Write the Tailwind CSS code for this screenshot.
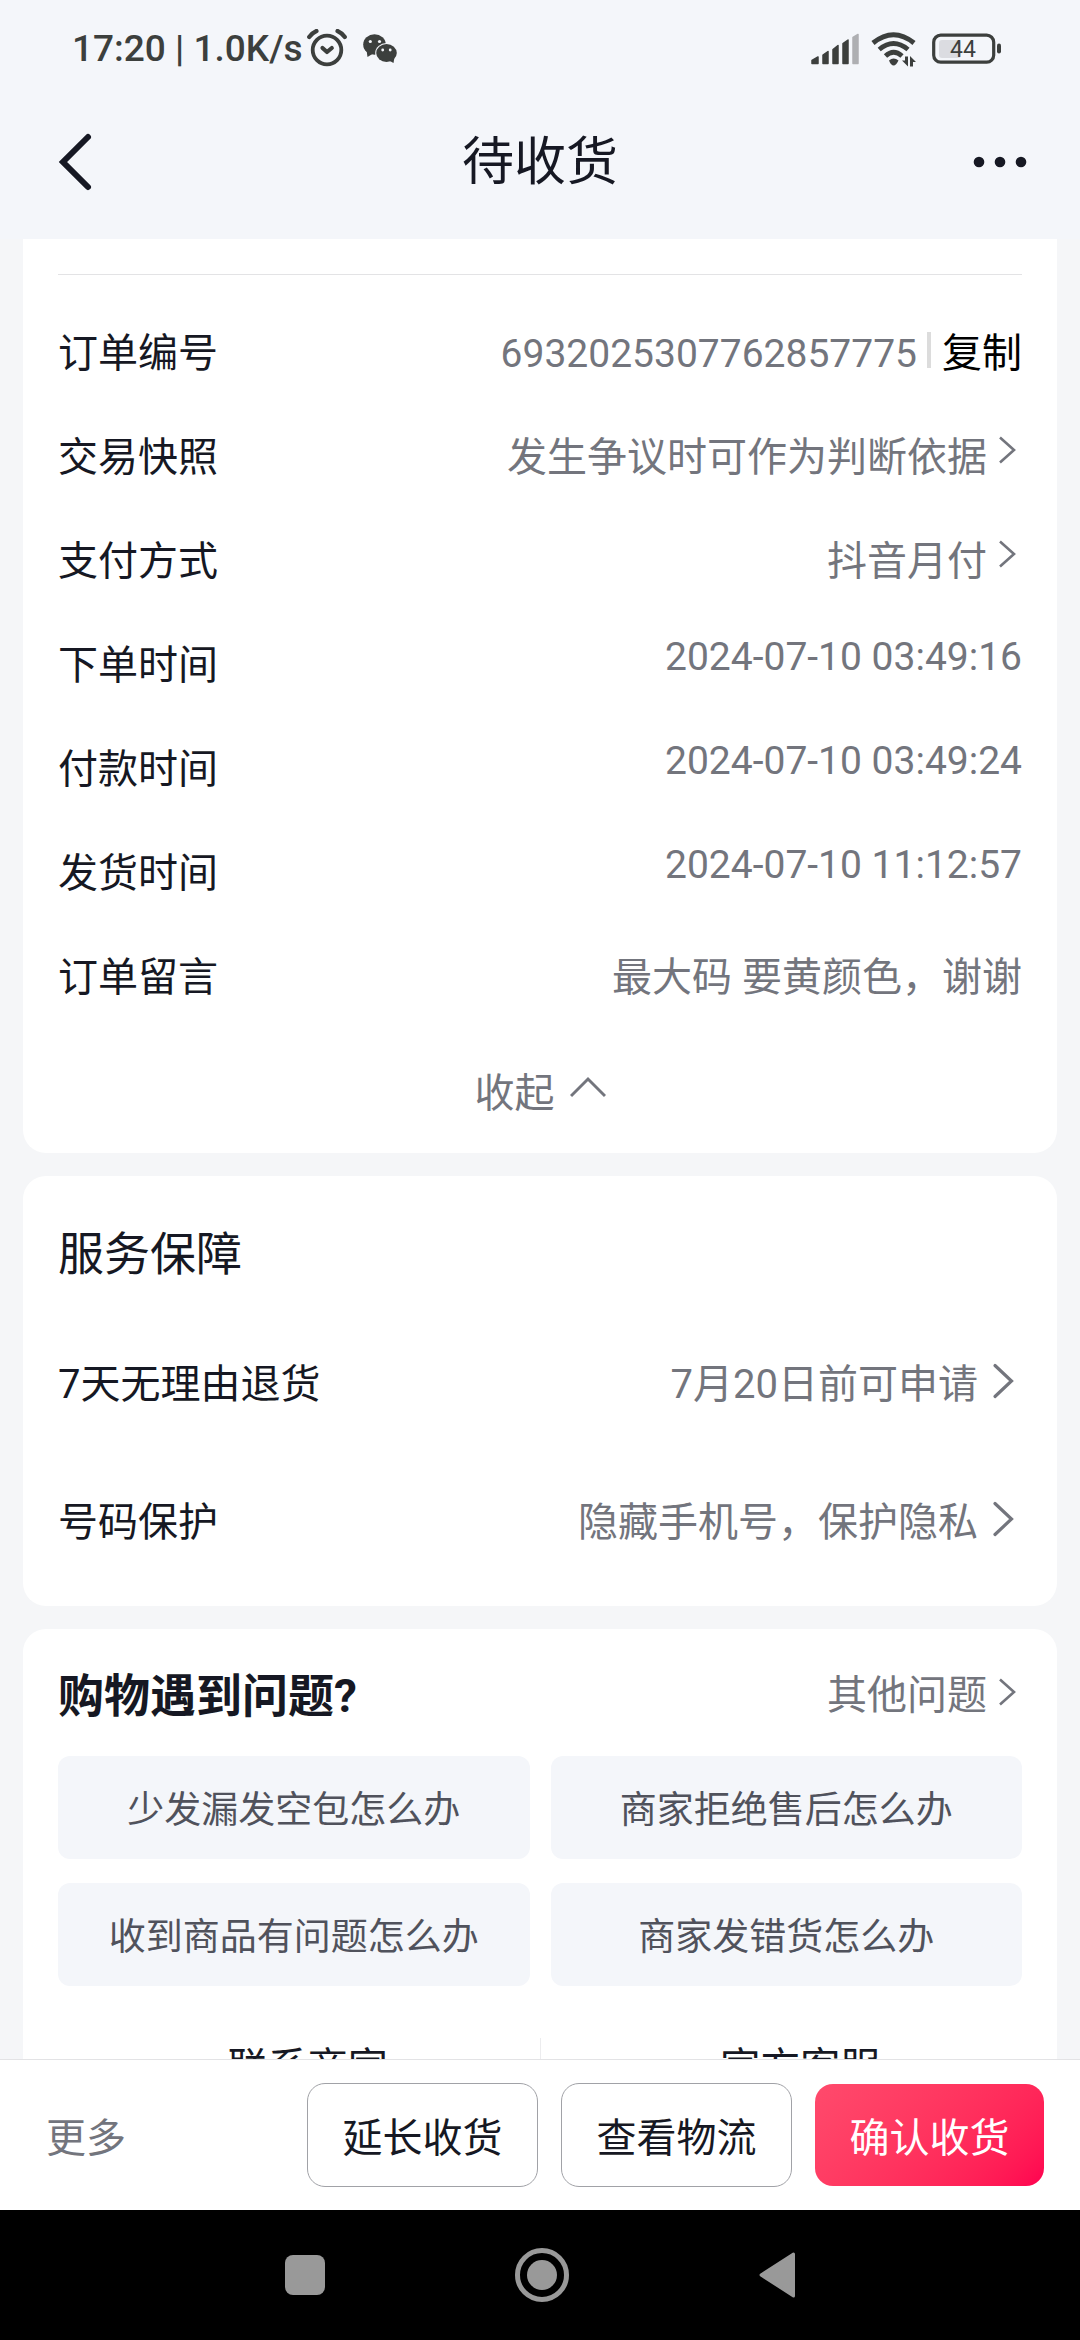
<!DOCTYPE html>
<html lang="zh-CN">
<head>
    <meta charset="UTF-8">
    <meta name="viewport" content="width=device-width, initial-scale=1.0">
    <title>待收货</title>
    <script src="https://cdn.jsdelivr.net/npm/@tailwindcss/browser@4"></script>
</head>
<body class="bg-[#f5f6f8] text-[#161823] font-['Roboto','Noto_Sans_CJK_SC',sans-serif] text-[40px] leading-[60px] h-screen flex flex-col overflow-hidden">
    <!-- Chevron shapes shared by the rows -->
    <svg class="hidden">
        <symbol id="chevron-sm" viewBox="0 0 35 44"><path d="M13 9.500 L27 22 L13 34.500" fill="none" stroke="currentColor" stroke-width="2.600"/></symbol>
        <symbol id="chevron-lg" viewBox="0 0 44 52"><path d="M17 10.500 L33.500 26 L17 41.500" fill="none" stroke="currentColor" stroke-width="3.200" stroke-linecap="round"/></symbol>
    </svg>

    <!-- Status Bar -->
    <div class="shrink-0 h-[98px] bg-[#f4f6fa] pl-[72px] pr-[78px] flex items-center justify-between text-[#3c3f3d]">
        <div class="flex items-center">
            <span class="text-[37px] font-medium">17:20 | 1.0K/s</span>
            <svg class="ml-1 w-10 h-10" viewBox="0 0 40 40" fill="none" stroke="currentColor" stroke-linecap="round" stroke-linejoin="round">
                <circle cx="20" cy="21" r="14.300" stroke-width="3.800"/>
                <path d="M2.200 8 Q5 4 9.500 2 M30.500 2 Q35 4 37.800 8" stroke-width="4.200"/>
                <path d="M15.500 19 L20 23 L24.800 19" stroke-width="4.200"/>
            </svg>
            <svg class="ml-4 w-9 h-[30px]" viewBox="0 0 36 30" fill="currentColor">
                <path d="M3.500 16 L4.500 23 L11 19z"/>
                <ellipse cx="11.500" cy="10.500" rx="11.300" ry="10.300"/>
                <ellipse cx="23.500" cy="19" rx="11.300" ry="10" fill="#f4f6fa"/>
                <path d="M31.500 23 L30.500 29 L25 26z"/>
                <ellipse cx="23.500" cy="19" rx="10.300" ry="9"/>
                <g fill="#f4f6fa"><circle cx="7.300" cy="7.500" r="1.600"/><circle cx="16.500" cy="7.500" r="1.600"/><circle cx="19.700" cy="16" r="1.400"/><circle cx="27.200" cy="16" r="1.400"/></g>
            </svg>
        </div>
        <div class="flex items-center">
            <svg class="w-12 h-8" viewBox="0 0 48 32" fill="currentColor" stroke="currentColor" stroke-width="1.500" stroke-linejoin="round">
                <path d="M1 27.500 L7 24 V30.500 H1z"/>
                <path d="M12 22 L17 18.500 V30.500 H12z"/>
                <path d="M22 16.500 L27 12.500 V30.500 H22z"/>
                <path d="M32 10.500 L37 7 V30.500 H32z"/>
                <path d="M42 4.500 L47 1.500 V30.500 H42z" fill="#aeafb2" stroke="#aeafb2"/>
            </svg>
            <svg class="ml-3 w-[46px] h-9" viewBox="0 0 46 36" fill="none" stroke="currentColor">
                <path d="M2 12 Q22.500 -4.500 43 12" stroke-width="5"/>
                <path d="M8.200 18.500 Q22.500 6.500 37 18.500" stroke-width="4.800"/>
                <path d="M14.500 25 Q22.500 17.500 31 25" stroke-width="4.800"/>
                <path d="M18 29.500 Q22.500 25.500 27.500 29.500 Q25 34.500 22.700 34.500 Q20 34.500 18 29.500z" fill="currentColor" stroke="none"/>
                <path d="M37 25.500 V35.500 L31 29.500 H34 V25.500z M39 35.500 V25 L45 31 H42 V35.500z" fill="currentColor" stroke="none"/>
            </svg>
            <svg class="ml-[15px] w-[70px] h-8" viewBox="0 0 70 32">
                <rect x="7" y="7" width="22" height="18" rx="3" fill="#dbdce1"/>
                <rect x="1.700" y="2.200" width="60" height="27" rx="7" fill="none" stroke="currentColor" stroke-width="3.200"/>
                <rect x="65" y="10.500" width="4" height="10" rx="2" fill="currentColor"/>
                <text x="31" y="24" text-anchor="middle" font-size="23" fill="currentColor">44</text>
            </svg>
        </div>
    </div>

    <!-- Header -->
    <header class="shrink-0 bg-[#f4f6fa] px-[53px] pb-[13px]">
        <div class="h-32 flex items-center justify-between">
            <button aria-label="返回"><svg class="w-[54px] h-[60px]" viewBox="0 0 54 60" fill="none" stroke="currentColor" stroke-width="6" stroke-linecap="round"><path d="M35 5 L10 30 L35 55"/></svg></button>
            <h1 class="pt-0.5 text-[52px]">待收货</h1>
            <button aria-label="更多操作"><svg class="w-[54px] h-[60px]" viewBox="0 0 54 60" fill="currentColor"><circle cx="6" cy="30" r="5.300"/><circle cx="27" cy="30" r="5.300"/><circle cx="48" cy="30" r="5.300"/></svg></button>
        </div>
    </header>

    <main class="flex-1 min-h-0 overflow-hidden px-[23px] flex flex-col gap-[23px]">
        <!-- Order Info -->
        <section class="shrink-0 bg-white rounded-b-[23px] px-[35px] pt-[35px] pb-[29px]">
            <hr class="border-[#e3e3e5]">
            <dl class="mt-[49px] flex flex-col gap-11">
                <div class="flex items-start justify-between">
                    <dt>订单编号</dt>
                    <dd class="flex items-start text-[#73757d]">
                        <span class="text-[39px]">6932025307762857775</span>
                        <span class="mt-2 ml-2.5 mr-[11px] w-1 h-9 bg-[#dcdcdc]"></span>
                        <button class="text-black">复制</button>
                    </dd>
                </div>
                <div class="flex items-start justify-between">
                    <dt>交易快照</dt>
                    <dd><a href="#" class="flex items-start text-[#73757d]">发生争议时可作为判断依据<svg class="w-[35px] h-11"><use href="#chevron-sm"/></svg></a></dd>
                </div>
                <div class="flex items-start justify-between">
                    <dt>支付方式</dt>
                    <dd><a href="#" class="flex items-start text-[#73757d]">抖音月付<svg class="w-[35px] h-11"><use href="#chevron-sm"/></svg></a></dd>
                </div>
                <div class="flex items-start justify-between">
                    <dt>下单时间</dt>
                    <dd class="text-[39px] leading-[42px] text-[#73757d]">2024-07-10 03:49:16</dd>
                </div>
                <div class="flex items-start justify-between">
                    <dt>付款时间</dt>
                    <dd class="text-[39px] leading-[42px] text-[#73757d]">2024-07-10 03:49:24</dd>
                </div>
                <div class="flex items-start justify-between">
                    <dt>发货时间</dt>
                    <dd class="text-[39px] leading-[42px] text-[#73757d]">2024-07-10 11:12:57</dd>
                </div>
                <div class="flex items-start justify-between">
                    <dt>订单留言</dt>
                    <dd class="text-[#73757d]">最大码 要黄颜色，谢谢</dd>
                </div>
            </dl>
            <button class="mt-14 mx-auto flex items-start gap-[15px] text-[#73757d]">
                收起
                <svg class="w-9 h-[46px]" viewBox="0 0 36 46" fill="none" stroke="currentColor" stroke-width="3"><path d="M1 32 L18 15 L35 32"/></svg>
            </button>
        </section>

        <!-- Service Guarantee -->
        <section class="shrink-0 bg-white rounded-[23px] px-[35px] pt-12 pb-[53px]">
            <h2 class="text-[46px]">服务保障</h2>
            <div class="mt-[71px] flex flex-col gap-[78px]">
                <a href="#" class="flex justify-between">
                    <span>7天无理由退货</span>
                    <span class="flex items-start text-[#73757d]">7月20日前可申请<svg class="w-11 h-[52px]"><use href="#chevron-lg"/></svg></span>
                </a>
                <a href="#" class="flex justify-between">
                    <span>号码保护</span>
                    <span class="flex items-start text-[#73757d]">隐藏手机号，保护隐私<svg class="w-11 h-[52px]"><use href="#chevron-lg"/></svg></span>
                </a>
            </div>
        </section>

        <!-- Shopping Help -->
        <section class="shrink-0 bg-white rounded-[23px] px-[35px] pt-[37px] pb-10">
            <div class="flex justify-between">
                <h2 class="text-[46px] font-bold">购物遇到问题?</h2>
                <a href="#" class="flex items-start text-[#73757d]">其他问题<svg class="w-[35px] h-[52px]"><use href="#chevron-sm"/></svg></a>
            </div>
            <div class="mt-[30px] grid grid-cols-2 gap-x-[21px] gap-y-6 text-[37px] text-[#50525c]">
                <button class="h-[103px] pt-1.5 rounded-xl bg-[#f4f6fa]">少发漏发空包怎么办</button>
                <button class="h-[103px] pt-1.5 rounded-xl bg-[#f4f6fa]">商家拒绝售后怎么办</button>
                <button class="h-[103px] pt-1.5 rounded-xl bg-[#f4f6fa]">收到商品有问题怎么办</button>
                <button class="h-[103px] pt-1.5 rounded-xl bg-[#f4f6fa]">商家发错货怎么办</button>
            </div>
            <div class="mt-[52px] grid grid-cols-[1fr_1px_1fr] gap-x-2.5">
                <button class="pl-7">联系商家</button>
                <span class="bg-[#ececee]"></span>
                <button class="pl-7">官方客服</button>
            </div>
        </section>
    </main>

    <!-- Action Bar -->
    <footer class="shrink-0 h-[151px] bg-white border-t border-[#e3e3e5] pl-[46px] pr-9 flex items-center justify-between">
        <button class="h-[104px] pt-2 text-[#73757d]">更多</button>
        <div class="flex items-center gap-[23px]">
            <button class="w-[231px] h-[104px] pt-2 rounded-[18px] border border-[#a1a2a7]">延长收货</button>
            <button class="w-[231px] h-[104px] pt-2 rounded-[18px] border border-[#a1a2a7]">查看物流</button>
            <button class="w-[229px] h-[102px] pt-2 rounded-[18px] bg-linear-135 from-[#ff4a6c] to-[#ff0050] text-white">确认收货</button>
        </div>
    </footer>

    <!-- System Navigation -->
    <nav class="shrink-0 h-[130px] bg-black flex items-center justify-center gap-[190px] text-[#999]">
        <button aria-label="最近任务" class="w-10 h-10 rounded-lg bg-current"></button>
        <button aria-label="主页"><svg class="w-[54px] h-[54px]" viewBox="0 0 54 54"><circle cx="27" cy="27" r="24.500" fill="none" stroke="currentColor" stroke-width="5"/><circle cx="27" cy="27" r="15" fill="currentColor"/></svg></button>
        <button aria-label="返回"><svg class="w-9 h-[46px]" viewBox="0 0 36 46" fill="currentColor" stroke="currentColor" stroke-width="3" stroke-linejoin="round"><path d="M2 23 L34.500 2 V44z"/></svg></button>
    </nav>
</body>
</html>
